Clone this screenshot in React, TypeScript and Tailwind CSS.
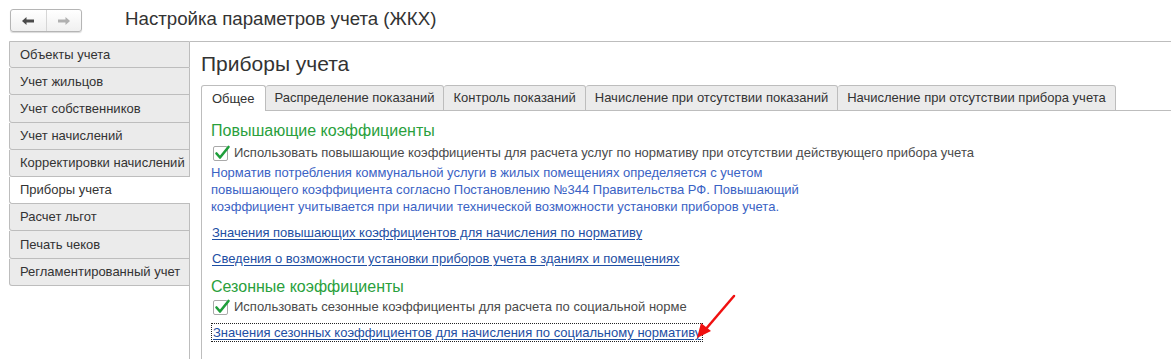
import React from "react";

const sections = [
  "Объекты учета",
  "Учет жильцов",
  "Учет собственников",
  "Учет начислений",
  "Корректировки начислений",
  "Приборы учета",
  "Расчет льгот",
  "Печать чеков",
  "Регламентированный учет",
];

const tabs = [
  "Общее",
  "Распределение показаний",
  "Контроль показаний",
  "Начисление при отсутствии показаний",
  "Начисление при отсутствии прибора учета",
];

function Check() {
  return (
    <span className="relative inline-block w-[15px] h-[15px] border border-[#a9a9a9] rounded-[2px] bg-white shrink-0">
      <svg className="absolute left-[0px] top-[-2px]" width="17" height="16" viewBox="0 0 17 16">
        <path d="M2.5 8.5 L6 12.5 L14.5 2" fill="none" stroke="#1e9e3a" strokeWidth="2.6" strokeLinecap="round" strokeLinejoin="round" />
      </svg>
    </span>
  );
}

export default function App() {
  const active = "Приборы учета";

  return (
    <div className="relative w-[1171px] h-[359px] bg-white overflow-hidden text-[13px] text-[#4a4a4a]" style={{ fontFamily: '"Liberation Sans", Arial, sans-serif' }}>
      {/* Header */}
      <div className="h-[41px] flex items-center">
        <div className="ml-[10px] flex w-[72px] h-[23px] border border-[#b5b5b5] rounded-[3px] bg-gradient-to-b from-white to-[#f0f0f0] shadow-[0_1px_1px_rgba(0,0,0,0.15)]">
          <div className="flex-1 flex items-center justify-center border-r border-[#d6d6d6]">
            <svg width="14" height="10" viewBox="0 0 14 10">
              <path d="M1 5 L5.5 1 L5.5 3.6 L13 3.6 L13 6.4 L5.5 6.4 L5.5 9 Z" fill="#4a4a4a" />
            </svg>
          </div>
          <div className="flex-1 flex items-center justify-center">
            <svg width="14" height="10" viewBox="0 0 14 10">
              <path d="M13 5 L8.5 1 L8.5 3.6 L1 3.6 L1 6.4 L8.5 6.4 L8.5 9 Z" fill="#b0b0b0" />
            </svg>
          </div>
        </div>
        <div className="ml-[43px] text-[18.7px] text-[#333] leading-none -mt-[2px]">Настройка параметров учета (ЖКХ)</div>
      </div>

      <div className="flex h-[318px]">
        {/* Left section list */}
        <div className="w-[190px] pl-[9px] flex flex-col">
          {sections.map((s, i) => (
            <div
              key={s}
              className={`h-[27.2px] shrink-0 flex items-center pl-[10px] border-l border-b border-[#bdbdbd] rounded-bl-[3px] ${
                i === 0 ? "border-t" : ""
              } ${s === active ? "bg-white text-[#333]" : "bg-[#ebebeb] border-r text-[#333]"}`}
            >
              {s}
            </div>
          ))}
          <div className="flex-1 border-r border-[#bdbdbd]" />
        </div>

        {/* Right content */}
        <div className="flex-1 border-t border-[#bdbdbd] pl-[11px] flex flex-col">
          <div className="mt-[10px] text-[21px] leading-[24px] text-[#333]">Приборы учета</div>

          <div className="mt-[9px] flex h-[26px]">
            {tabs.map((t, i) => (
              <div
                key={t}
                className={`flex items-center border-t border-r border-[#bdbdbd] rounded-t-[3px] ${
                  i === 0 ? "bg-white border-l px-[10px] text-[#333]" : "bg-[#ebebeb] border-b px-[9px] text-[#333]"
                }`}
              >
                {t}
              </div>
            ))}
            <div className="flex-1 border-b border-[#bdbdbd]" />
          </div>

          <div className="flex-1 border-l border-[#bdbdbd] pl-[9px] pt-[10px]">
            <div className="text-[16px] leading-[20px] text-[#2aa03c]">Повышающие коэффициенты</div>
            <div className="mt-[2px] flex items-center gap-[6px] pl-[2px] h-[20px]">
              <Check />
              <span>Использовать повышающие коэффициенты для расчета услуг по нормативу при отсутствии действующего прибора учета</span>
            </div>
            <div className="mt-[1px] leading-[17px] text-[#3a62c4]">
              Норматив потребления коммунальной услуги в жилых помещениях определяется с учетом
              <br />
              повышающего коэффициента согласно Постановлению №344 Правительства РФ. Повышающий
              <br />
              коэффициент учитывается при наличии технической возможности установки приборов учета.
            </div>
            <div className="mt-[9px] leading-[17px] pl-[1px]">
              <span className="text-[#1d4ea3] underline underline-offset-2">Значения повышающих коэффициентов для начисления по нормативу</span>
            </div>
            <div className="mt-[9px] leading-[17px] pl-[1px]">
              <span className="text-[#1d4ea3] underline underline-offset-2">Сведения о возможности установки приборов учета в зданиях и помещениях</span>
            </div>
            <div className="mt-[10px] text-[16px] leading-[20px] text-[#2aa03c]">Сезонные коэффициенты</div>
            <div className="mt-[0px] flex items-center gap-[6px] pl-[2px] h-[20px]">
              <Check />
              <span>Использовать сезонные коэффициенты для расчета по социальной норме</span>
            </div>
            <div className="mt-[6px] leading-[17px]">
              <span className="inline-block border border-dotted border-[#222] px-[1px] text-[#1d4ea3] underline underline-offset-2">
                Значения сезонных коэффициентов для начисления по социальному нормативу
              </span>
            </div>
          </div>
        </div>
      </div>

      {/* Annotation arrow */}
      <svg className="absolute left-[689px] top-[290px]" width="54" height="56" viewBox="0 0 54 56">
        <line x1="45" y1="6" x2="16" y2="40" stroke="#f01010" strokeWidth="2.5" strokeLinecap="round" />
        <path d="M8 48 L12 33 L22 41 Z" fill="#f01010" />
      </svg>
    </div>
  );
}
